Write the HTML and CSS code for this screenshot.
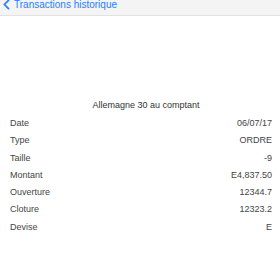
FILE: index.html
```html
<!DOCTYPE html>
<html lang="fr">
<head>
    <meta charset="UTF-8">
    <title>Transaction</title>
    <link rel="stylesheet" href="styles.css">
</head>
<body>
    <div class="nav">
        <a class="back">
            <svg width="7" height="11" viewBox="0 0 7 11"><path d="M6 0.8 L1.4 5.5 L6 10.2" fill="none" stroke="#2f7cf6" stroke-width="1.7"/></svg>
            <span>Transactions historique</span>
        </a>
    </div>
    <div class="detail">
        <div class="title">Allemagne 30 au comptant</div>
        <ul class="rows">
            <li><span>Date</span><span>06/07/17</span></li>
            <li><span>Type</span><span>ORDRE</span></li>
            <li><span>Taille</span><span>-9</span></li>
            <li><span>Montant</span><span>E4,837.50</span></li>
            <li><span>Ouverture</span><span>12344.7</span></li>
            <li><span>Cloture</span><span>12323.2</span></li>
            <li><span>Devise</span><span>E</span></li>
        </ul>
    </div>
</body>
</html>
```

FILE: styles.css
```css
*{
    margin:0;padding:0;
}
html,body{
    width:100%;
    height:100%;
    background-color:#fff;
    color:#3a3a3a;
    font-family:"Liberation Sans", Arial, sans-serif;
}
ul,li{
    list-style:none;
}
.nav{
    height:15px;
    background-color:#f4f4f4;
    border-bottom:1px solid #e2e2e2;
    overflow:hidden;
}
.back{
    display:flex;
    align-items:center;
    gap:4px;
    padding-left:3px;
    margin-top:-1px;
    color:#2f7cf6;
    font-size:10px;
}
.detail{
    padding:82px 8px 0 10px;
}
.title{
    text-align:center;
    font-size:9px;
    color:#333;
    padding-left:10px;
    line-height:14px;
    margin-bottom:3px;
}
.rows li{
    display:flex;
    justify-content:space-between;
    font-size:9px;
    line-height:17.3px;
    color:#444;
}
```
